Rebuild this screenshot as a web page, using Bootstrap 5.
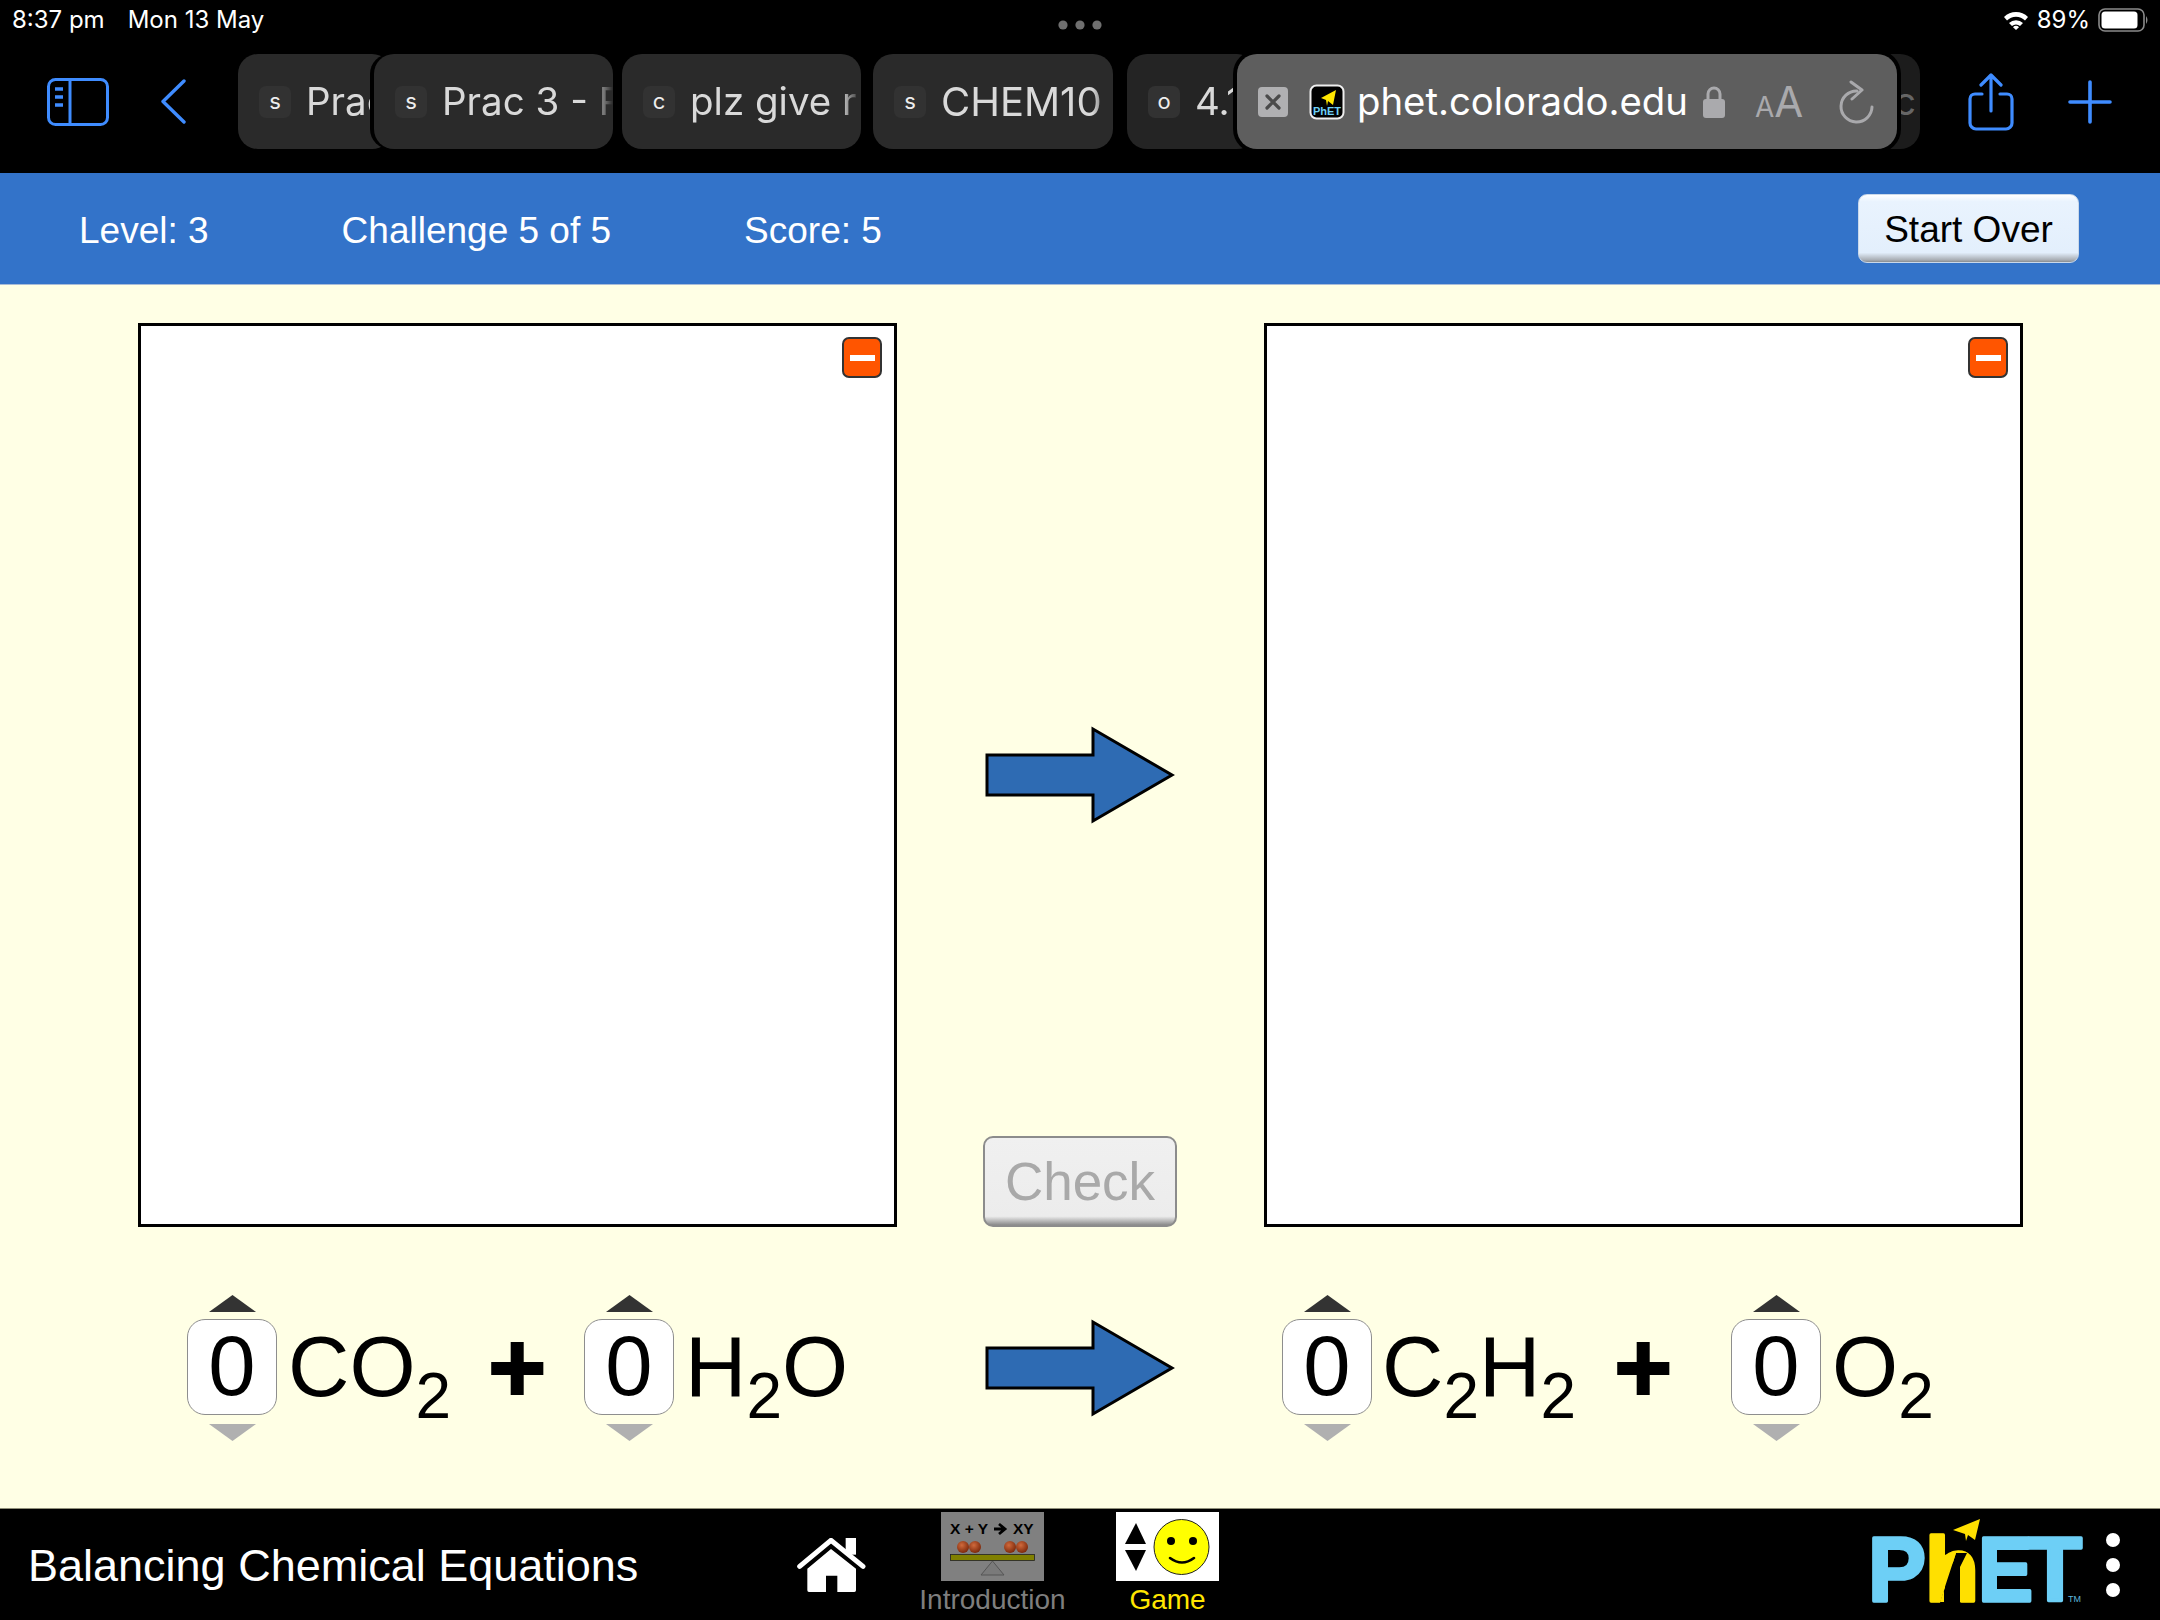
<!DOCTYPE html>
<html lang="en">
<head>
<meta charset="utf-8">
<title>Balancing Chemical Equations</title>
<link href="https://cdn.jsdelivr.net/npm/bootstrap@5.3.0/dist/css/bootstrap.min.css" rel="stylesheet">
<style>
html,body{margin:0;background:#000;}
.pg{width:2160px;height:1620px;overflow:hidden;font-family:"Liberation Sans",Arial,sans-serif;}
.stbar{height:46px;background:#000;color:#fff;font-family:Inter,"Liberation Sans",sans-serif;font-size:24px;padding:0 11px 6px 12px;}
.stbar .tm{margin-right:23px;}
.dots3{width:44px;margin-left:794px;margin-top:10px;}
.tbar{height:127px;background:#000;padding:8px 0 24px 47px;font-family:Inter,"Liberation Sans",sans-serif;}
.sb-ic{width:62px;height:48px;flex:none;}
.bk-ic{width:26px;height:45px;margin-left:51px;flex:none;}
.tabx{height:95px;border-radius:20px;background:#2a2a2a;color:#d9d9d9;font-size:38.5px;padding-left:21px;overflow:hidden;white-space:nowrap;flex:none;position:relative;}
.tabx .fav{width:32px;height:32px;border-radius:7px;background:#323232;font-size:22px;display:flex;align-items:center;justify-content:center;margin-right:15px;flex:none;color:#eee;}
.tabx .lbl{overflow:hidden;flex:1;-webkit-mask-image:linear-gradient(90deg,#000 88%,transparent 100%);mask-image:linear-gradient(90deg,#000 88%,transparent 100%);}
.t1{width:154px;margin-left:52px;}
.t2{width:239px;margin-left:-18px;box-shadow:-4px 0 0 #000;z-index:1;}
.t3{width:239px;margin-left:9px;}
.t4{width:240px;margin-left:12px;font-size:40px;}
.t5{width:130px;margin-left:14px;background:#242424;}
.t6{width:60px;margin-left:-37px;background:#1c1c1c;color:#666;justify-content:flex-end;padding:0 4px 0 0;z-index:1;}
.tact{width:660px;margin-left:-20px;background:#5e5e5e;color:#fff;box-shadow:0 0 0 4px #000;z-index:2;padding-left:21px;font-size:38.3px;}
.xbx{width:30px;height:30px;border-radius:4px;background:#b0b0b2;flex:none;margin-right:21px;}
.favp{width:36px;height:36px;flex:none;margin-right:12px;}
.urlt{width:346px;flex:none;}
.lk{width:22px;height:32px;flex:none;}
.aax{color:#a9a9ac;margin-left:30px;width:50px;flex:none;line-height:1;white-space:nowrap;}
.aax .a1{font-size:28px;}
.aax .a2{font-size:42px;}
.rld{width:36px;height:44px;margin-left:33px;flex:none;}
.shr{width:46px;height:58px;margin-left:48px;flex:none;}
.plz{width:44px;height:44px;margin-left:54px;flex:none;}
.hdr{height:112px;background:#3373c9;border-bottom:1px solid #a9bcd6;padding:0 81px 0 79px;color:#fff;font-size:37px;}
.hdr .l1,.hdr .l2,.hdr .l3{padding-top:5px;}
.hdr .l2{margin-left:133px;}
.hdr .l3{margin-left:133px;}
.btn.so{width:221px;height:69px;padding:3px 0 0;font-size:37px;color:#000;border:1px solid #c9d8ea;border-radius:9px;background:linear-gradient(#fff 0,#e9f3fe 10%,#e3effc 86%,#a8adb3 97%,#868b90 100%);}
.stage{height:1223px;background:#ffffe5;padding:38px 0 0 138px;}
.pnl{width:759px;height:904px;background:#fff;border:3px solid #000;padding:11px 12px 12px;flex:none;}
.mnb{width:40px;height:41px;background:#ff5500;border:2px solid #333;border-radius:7px;}
.mnb span{display:block;width:25px;height:6px;background:#fff;}
.midc{width:367px;height:904px;flex:none;padding-right:1px;}
.arw{width:190px;height:98px;flex:none;display:block;}
.midc .arw{margin-top:403px;}
.btn.chk{width:194px;height:91px;padding:0;margin-top:auto;font-size:53px;line-height:1;color:#a9a9a9;border:2px solid #8c8c8c;border-radius:10px;opacity:1;background:linear-gradient(#f0f0f0,#ececec 90%,#8b8b8b 100%);}
.eqr{margin-top:69px;height:144px;margin-left:49px;}
.eqgrp{width:798px;flex:none;}
.eqgrp2{margin-left:107px;flex:none;}
.spn{width:90px;flex:none;}
.spn svg{width:47px;height:17px;display:block;}
.spb{width:90px;height:96px;margin:7px 0 9px;padding-bottom:4px;background:#fff;border:1px solid #8e8e8e;border-radius:18px;font-size:85px;line-height:1;color:#000;}
.spc{font-size:85px;line-height:1;color:#000;margin-left:11px;padding-bottom:4px;flex:none;white-space:nowrap;}
.spc .dn{font-size:64px;line-height:0;vertical-align:-22px;position:static;}
.w1{width:200px;}.w2{width:232px;margin-left:10px;}
.pls{width:53px;font-size:100px;font-weight:700;line-height:1;color:#000;flex:none;padding-bottom:2px;-webkit-text-stroke:2px #000;}
.ms1{margin-left:43px;}.ms2{margin-left:64px;}
.nbar{height:112px;background:#000;border-top:1px solid #8f8f7a;color:#fff;}
.ttl{width:797px;padding:3px 0 0 28px;font-size:45px;flex:none;white-space:nowrap;}
.hse{width:69px;height:54px;flex:none;}
.nvi{flex:none;padding-top:3px;}
.nvi svg{width:103px;height:69px;display:block;}
.nvi .cap{font-size:28px;line-height:32px;margin-top:3px;white-space:nowrap;}
.c-a{width:145px;margin-left:54px;}.c-a .cap{color:#7e7e7e;}
.c-b{width:103px;margin-left:51px;}.c-b .cap{color:#ffe600;}
.lgo{width:215px;height:96px;margin-left:653px;flex:none;}
.dts{width:14px;margin-left:19px;gap:11px;flex:none;}
.dts span{display:block;width:14px;height:14px;border-radius:50%;background:#fff;}
</style>
</head>
<body>
<div class="pg d-flex flex-column">
  <div class="stbar d-flex align-items-center">
    <span class="tm">8:37 pm</span><span>Mon 13 May</span>
    <svg class="dots3" viewBox="0 0 44 10" height="10"><circle cx="5" cy="5" r="4.6" fill="#6f6f6f"/><circle cx="22" cy="5" r="4.6" fill="#6f6f6f"/><circle cx="39" cy="5" r="4.6" fill="#6f6f6f"/></svg>
    <div class="ms-auto d-flex align-items-center gap-2">
      <svg width="26" height="20" viewBox="0 0 26 20"><path d="M1 7 A17 17 0 0 1 25 7 L22 10.5 A12.5 12.5 0 0 0 4 10.5Z" fill="#fff"/><path d="M6 13 A10 10 0 0 1 20 13 L17 16 A6 6 0 0 0 9 16Z" fill="#fff"/><path d="M10 17.2 A4 4 0 0 1 16 17.2 L13 20Z" fill="#fff"/></svg>
      <span>89%</span>
      <svg width="51" height="24" viewBox="0 0 51 24"><rect x="1" y="1" width="45" height="22" rx="6" fill="none" stroke="#8a8a8a" stroke-width="1.6"/><rect x="3.5" y="3.5" width="36" height="17" rx="3.5" fill="#fff"/><path d="M48 8 q3 4 0 8z" fill="#8a8a8a"/></svg>
    </div>
  </div>
  <div class="tbar d-flex align-items-center">
    <svg class="sb-ic" viewBox="0 0 62 48" fill="none" stroke="#3f8cff" stroke-width="3"><rect x="1.5" y="1.5" width="59" height="45" rx="7"/><path d="M23 2V46"/><path d="M8 11h8M8 19h8M8 27h8" stroke-width="3.5"/></svg>
    <svg class="bk-ic" viewBox="0 0 26 45" fill="none" stroke="#3f8cff" stroke-width="3.4" stroke-linecap="round" stroke-linejoin="round"><path d="M24 2 L3 22.5 L24 43"/></svg>
    <div class="tabx t1 d-flex align-items-center"><span class="fav">s</span><span class="lbl">Prac</span></div>
    <div class="tabx t2 d-flex align-items-center"><span class="fav">s</span><span class="lbl">Prac 3 - R</span></div>
    <div class="tabx t3 d-flex align-items-center"><span class="fav">c</span><span class="lbl">plz give r</span></div>
    <div class="tabx t4 d-flex align-items-center"><span class="fav">s</span><span class="lbl">CHEM10</span></div>
    <div class="tabx t5 d-flex align-items-center"><span class="fav">o</span><span class="lbl">4.1</span></div>
    <div class="tabx tact d-flex align-items-center">
      <svg class="xbx" viewBox="0 0 30 30"><path d="M9 9 L21 21 M21 9 L9 21" stroke="#4a4a4a" stroke-width="3.2" stroke-linecap="round"/></svg>
      <svg class="favp" viewBox="0 0 36 36"><rect x="1.5" y="1.5" width="33" height="33" rx="6" fill="#000" stroke="#eee" stroke-width="2"/><polygon points="12,14 27,6 24,21 19,17 18,22 17,16" fill="#ffe600"/><text x="18" y="31" font-family="Liberation Sans" font-size="11" font-weight="700" text-anchor="middle" fill="#6dcff6">PhET</text></svg>
      <span class="urlt">phet.colorado.edu</span>
      <svg class="lk" viewBox="0 0 22 32"><rect x="0" y="13" width="22" height="19" rx="3" fill="#aaaaad"/><path d="M5 14V8a6 6 0 0 1 12 0V14" fill="none" stroke="#aaaaad" stroke-width="3"/></svg>
      <span class="aax"><span class="a1">A</span><span class="a2">A</span></span>
      <svg class="rld" viewBox="0 0 36 44" fill="none" stroke="#a9a9ac" stroke-width="3" stroke-linecap="round" stroke-linejoin="round"><path d="M19 11 A15.5 15.5 0 1 0 34 27"/><path d="M13 2 L24 10 L14 19"/></svg>
    </div>
    <div class="tabx t6 d-flex align-items-center">c</div>
    <svg class="shr" viewBox="0 0 46 58" fill="none" stroke="#3f8cff" stroke-width="3.2" stroke-linecap="round" stroke-linejoin="round"><path d="M14 21H7a5 5 0 0 0-5 5V50a6 6 0 0 0 6 6H38a6 6 0 0 0 6-6V26a5 5 0 0 0-5-5H32"/><path d="M23 38V2M13 12 L23 2 L33 12"/></svg>
    <svg class="plz" viewBox="0 0 44 44" stroke="#3f8cff" stroke-width="3.6" stroke-linecap="round"><path d="M22 2V42M2 22H42"/></svg>
  </div>
  <div class="hdr d-flex align-items-center">
    <span class="l1">Level: 3</span><span class="l2">Challenge 5 of 5</span><span class="l3">Score: 5</span>
    <button type="button" class="btn so ms-auto">Start Over</button>
  </div>
  <div class="stage">
    <div class="d-flex">
      <div class="pnl d-flex justify-content-end align-items-start"><div class="mnb d-flex align-items-center justify-content-center"><span></span></div></div>
      <div class="midc d-flex flex-column align-items-center">
        <svg class="arw" viewBox="0 0 190 98"><polygon points="2,29 108,29 108,3 187,49 108,95 108,69 2,69" fill="#2e6bb3" stroke="#000" stroke-width="3"/></svg>
        <button type="button" class="btn chk" disabled>Check</button>
      </div>
      <div class="pnl d-flex justify-content-end align-items-start"><div class="mnb d-flex align-items-center justify-content-center"><span></span></div></div>
    </div>
    <div class="eqr d-flex align-items-center">
      <div class="eqgrp d-flex align-items-center">
        <div class="spn d-flex flex-column align-items-center"><svg viewBox="0 0 47 17"><polygon points="0,17 23.5,0 47,17" fill="#333"/></svg><div class="spb d-flex align-items-center justify-content-center">0</div><svg viewBox="0 0 47 17"><polygon points="0,0 23.5,17 47,0" fill="#b0b0b0"/></svg></div>
        <div class="spc w1">CO<sub class="dn">2</sub></div>
        <div class="pls text-center">+</div>
        <div class="spn ms1 d-flex flex-column align-items-center"><svg viewBox="0 0 47 17"><polygon points="0,17 23.5,0 47,17" fill="#333"/></svg><div class="spb d-flex align-items-center justify-content-center">0</div><svg viewBox="0 0 47 17"><polygon points="0,0 23.5,17 47,0" fill="#b0b0b0"/></svg></div>
        <div class="spc">H<sub class="dn">2</sub>O</div>
      </div>
      <svg class="arw" viewBox="0 0 190 98"><polygon points="2,29 108,29 108,3 187,49 108,95 108,69 2,69" fill="#2e6bb3" stroke="#000" stroke-width="3"/></svg>
      <div class="eqgrp2 d-flex align-items-center">
        <div class="spn d-flex flex-column align-items-center"><svg viewBox="0 0 47 17"><polygon points="0,17 23.5,0 47,17" fill="#333"/></svg><div class="spb d-flex align-items-center justify-content-center">0</div><svg viewBox="0 0 47 17"><polygon points="0,0 23.5,17 47,0" fill="#b0b0b0"/></svg></div>
        <div class="spc w2">C<sub class="dn">2</sub>H<sub class="dn">2</sub></div>
        <div class="pls text-center">+</div>
        <div class="spn ms2 d-flex flex-column align-items-center"><svg viewBox="0 0 47 17"><polygon points="0,17 23.5,0 47,17" fill="#333"/></svg><div class="spb d-flex align-items-center justify-content-center">0</div><svg viewBox="0 0 47 17"><polygon points="0,0 23.5,17 47,0" fill="#b0b0b0"/></svg></div>
        <div class="spc">O<sub class="dn">2</sub></div>
      </div>
    </div>
  </div>
  <div class="nbar d-flex align-items-center">
    <div class="ttl">Balancing Chemical Equations</div>
    <svg class="hse" viewBox="0 0 205 162" fill="#fff"><rect x="145" y="0" width="31" height="50"/><path d="M7 85 L101 7 L197 85" fill="none" stroke="#fff" stroke-width="15" stroke-linecap="round" stroke-linejoin="miter"/><path d="M30 92 L101 33 L176 92 V157 q0 5-5 5 H120 V113 H86 V162 H35 q-5 0-5-5Z"/></svg>
    <div class="nvi c-a d-flex flex-column align-items-center align-self-start">
      <svg viewBox="0 0 103 69">
        <defs><radialGradient id="bl" cx="40%" cy="35%" r="65%"><stop offset="0" stop-color="#d06a3c"/><stop offset="1" stop-color="#7e2a0c"/></radialGradient></defs>
        <rect width="103" height="69" fill="#808080"/>
        <text x="9" y="22" font-family="Liberation Sans" font-size="15.5" font-weight="700" fill="#000">X + Y</text>
        <path d="M53 17H63M58 12l6 5-6 5" stroke="#000" stroke-width="2.8" fill="none"/>
        <text x="72" y="22" font-family="Liberation Sans" font-size="15.5" font-weight="700" fill="#000">XY</text>
        <circle cx="22" cy="35" r="6" fill="url(#bl)"/><circle cx="34" cy="35" r="6" fill="url(#bl)"/><circle cx="69" cy="35" r="6" fill="url(#bl)"/><circle cx="81" cy="35" r="6" fill="url(#bl)"/>
        <rect x="9.5" y="42.5" width="84" height="6" fill="#808000" stroke="#222" stroke-width=".8"/>
        <polygon points="51.5,49 40,63 63,63" fill="#7a7a7a" stroke="#555"/>
      </svg>
      <div class="cap">Introduction</div>
    </div>
    <div class="nvi c-b d-flex flex-column align-items-center align-self-start">
      <svg viewBox="0 0 103 69">
        <rect width="103" height="69" fill="#fff"/>
        <polygon points="20,11 30,32 9,32" fill="#000"/><polygon points="20,59 30,38 9,38" fill="#000"/>
        <circle cx="65.5" cy="35" r="27.5" fill="#ff0" stroke="#222" stroke-width="1"/>
        <circle cx="55" cy="29" r="4" fill="#000"/><circle cx="77" cy="29" r="4" fill="#000"/>
        <path d="M54 46 Q66 55 78 46" fill="none" stroke="#000" stroke-width="2.6" stroke-linecap="round"/>
      </svg>
      <div class="cap">Game</div>
    </div>
    <svg class="lgo" viewBox="0 0 215 96">
      <g font-family="Liberation Sans" font-weight="700" font-size="91" stroke-width="3.5" stroke-linejoin="round">
        <text x="-4" y="84" fill="#6dcff6" stroke="#6dcff6" textLength="58" lengthAdjust="spacingAndGlyphs">P</text>
        <text x="53" y="84" fill="#ffe000" stroke="#ffe000" textLength="54" lengthAdjust="spacingAndGlyphs">h</text>
        <text x="106" y="84" fill="#6dcff6" stroke="#6dcff6" textLength="55" lengthAdjust="spacingAndGlyphs">E</text>
        <text x="156" y="84" fill="#6dcff6" stroke="#6dcff6" textLength="54" lengthAdjust="spacingAndGlyphs">T</text>
      </g>
      <polygon points="84,36 68,86 88,86 88,50 95,36" fill="#000"/>
      <polygon points="72,38 84,36 68,85 72,85" fill="#ffe000"/>
      <polygon points="81,13 108,2 103,23 96,18 94,24 93,17" fill="#ffe000"/>
      <text x="196" y="85" font-family="Liberation Sans" font-size="9" fill="#5db6db">TM</text>
    </svg>
    <div class="dts d-flex flex-column"><span></span><span></span><span></span></div>
  </div>
</div>
<script src="https://cdn.jsdelivr.net/npm/bootstrap@5.3.0/dist/js/bootstrap.bundle.min.js"></script>
</body>
</html>
